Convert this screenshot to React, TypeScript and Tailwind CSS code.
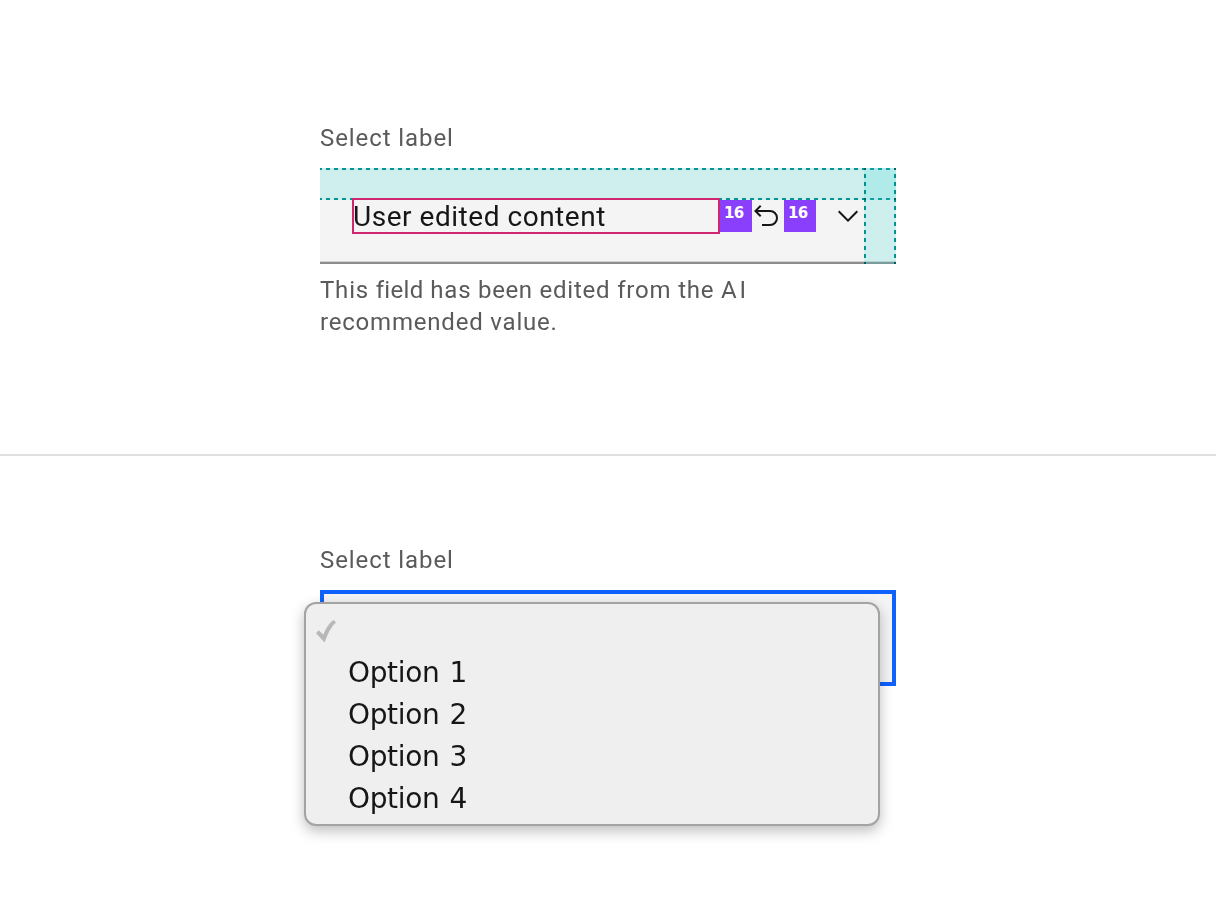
const horizontalDashes =
  "absolute inset-x-0 h-0.5 mix-blend-multiply bg-[repeating-linear-gradient(90deg,#009d9a_0_2px,transparent_2px_6px,#009d9a_6px_8px)]";
const verticalDashes =
  "absolute inset-y-0 w-0.5 mix-blend-multiply bg-[repeating-linear-gradient(180deg,#009d9a_0_2px,transparent_2px_6px,#009d9a_6px_8px)]";

const options = ["Option 1", "Option 2", "Option 3", "Option 4"];

function Label() {
  return (
    <div className="h-8 whitespace-nowrap text-[24px] leading-8 tracking-[0.92px] text-[#5a5a5a]">Select label</div>
  );
}

function Spacer() {
  return (
    <div className="h-8 w-8 bg-[#8a3ffc] pl-1 font-['DejaVu_Sans',sans-serif] text-[15px] font-bold leading-[26px] tracking-[-0.8px] text-white">
      16
    </div>
  );
}

function EditedSelect() {
  return (
    <section className="h-[454px] pl-80 pt-[122px]">
      <Label />
      <div className="relative mt-3.5 flex h-24 w-[576px] bg-[#f4f4f4] pl-8 pt-[30px]">
        <div className="absolute inset-x-0 bottom-0 h-[3px] border-t border-[#d2d2d2] bg-[#8d8d8d]" />
        <div className="absolute inset-x-0 top-0 h-8 bg-[#3ddbd9]/20">
          <div className={`${horizontalDashes} top-0`} />
          <div className={`${horizontalDashes} top-[30px]`} />
        </div>
        <div className="absolute inset-y-0 right-0 w-8 bg-[#3ddbd9]/20">
          <div className={`${verticalDashes} left-0`} />
          <div className={`${verticalDashes} right-0`} />
        </div>
        <div className="relative h-9 w-[368px] border-2 border-[#d02670]">
          <div className="-ml-px whitespace-nowrap text-[28px] leading-[34px] tracking-[0.53px] text-[#161616]">
            User edited content
          </div>
        </div>
        <div className="relative flex pt-0.5">
          <Spacer />
          <svg className="-ml-0.5 mr-0.5 h-8 w-8" viewBox="0 0 32 32" fill="#161616">
            <path d="M20 10H7.815l3.587-3.586L10 5 4 11l6 6 1.402-1.415L7.818 12H20a6 6 0 0 1 0 12h-8v2h8a8 8 0 0 0 0-16Z" />
          </svg>
          <Spacer />
          <svg className="ml-4 h-8 w-8" viewBox="0 0 32 32" fill="#161616">
            <path d="M16 22 6 12l1.4-1.4 8.6 8.6 8.6-8.6L26 12z" />
          </svg>
        </div>
      </div>
      <div className="mt-2.5 whitespace-nowrap text-[24px] leading-8 tracking-[0.8px] text-[#5a5a5a]">
        <div>
          This <span className="tracking-[0.3px]">field</span> has <span className="tracking-[0.6px]">been</span>{" "}
          edited from the <span className="tracking-[2.8px]">AI</span>
        </div>
        <div>recommended value.</div>
      </div>
    </section>
  );
}

function OpenSelect() {
  return (
    <section className="pl-80 pt-[88px]">
      <Label />
      <div className="relative mt-3.5 h-24 w-[576px] border-4 border-[#0f62fe] bg-[#f4f4f4]">
        <div className="absolute -left-5 top-2 h-56 w-[576px] rounded-xl border-2 border-[#a3a3a3] bg-[#efefef] pt-[6px] shadow-[0_5px_14px_rgba(0,0,0,0.26)]">
          <div className="flex h-[42px] items-center pl-2.5">
            <svg className="h-6 w-5" viewBox="0 0 20 24" fill="#b8b8b8">
              <path d="M0 14.2 2.8 11.3 7.3 15.7C9.7 9.2 13.4 3.8 17.6.9L20 3.3C15 8.3 11.4 15.2 8.6 23.5Z" />
            </svg>
          </div>
          {options.map((option) => (
            <div
              key={option}
              className="h-[42px] whitespace-nowrap pl-[42px] font-['DejaVu_Sans',sans-serif] text-[28px] leading-[41px] tracking-[-0.35px] text-[#161616] [word-spacing:1.5px]"
            >
              {option}
            </div>
          ))}
        </div>
      </div>
    </section>
  );
}

export default function App() {
  return (
    <main className="h-[912px] w-[1216px] overflow-hidden bg-white font-[Roboto,sans-serif]">
      <EditedSelect />
      <div className="h-0.5 bg-[#e0e0e0]" />
      <OpenSelect />
    </main>
  );
}
